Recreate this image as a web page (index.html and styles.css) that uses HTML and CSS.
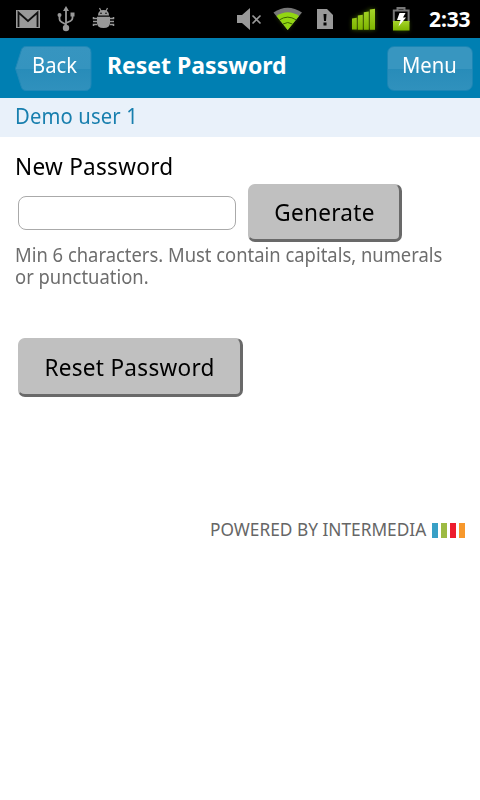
FILE: index.html
```html
<!DOCTYPE html>
<html lang="en">
<head>
<meta charset="utf-8">
<title>Reset Password</title>
<link rel="stylesheet" href="styles.css">
</head>
<body>
<div class="status">
  <svg class="status-icons" width="420" height="38" viewBox="0 0 420 38">
    <defs>
      <linearGradient id="green" x1="0" y1="0" x2="0" y2="1"><stop offset="0" stop-color="#a6d52a"/><stop offset="1" stop-color="#7eb500"/></linearGradient>
      <filter id="glow" x="-40%" y="-40%" width="180%" height="180%"><feGaussianBlur stdDeviation="2"/></filter>
    </defs>
    <g fill="#999">
      <path d="M16 10h24v18H16z"/>
      <path d="M18.500 27V12.500L28 21l9.500-8.500V27" fill="none" stroke="#111" stroke-width="1.800"/>
      <path d="M66 6l3 5h-6z"/><circle cx="66" cy="28" r="3.200"/>
      <path d="M66 10v17M59.500 16v3q0 2 2 3l4.500 2.500M72.500 15v3q0 2-2 3L66 23" fill="none" stroke="#999" stroke-width="1.800"/>
      <circle cx="59.500" cy="15" r="2"/><path d="M70.500 12.500h4v4h-4z"/>
      <path d="M98 15.500q0-5.500 5.500-5.500t5.500 5.500zM97 16.800h13v6.200q0 5-6.500 5T97 23z"/>
      <path d="M99.500 8l2 4M107.500 8l-2 4" fill="none" stroke="#999" stroke-width="1.200"/>
      <path d="M97 18.500h-3.500V17M97 21.500h-4M97 24.500h-3.500V26M110 18.500h3.500V17M110 21.500h4M110 24.500h3.500V26" fill="none" stroke="#999" stroke-width="1.500"/>
      <circle cx="101" cy="13.300" r=".8" fill="#000"/><circle cx="106" cy="13.300" r=".8" fill="#000"/>
      <path d="M237 15h5l8-7v22l-8-7h-5z"/>
      <path d="M252.500 15.500l8 8m0-8l-8 8" stroke="#999" stroke-width="1.600"/>
      <path d="M317 9h10l6 6v14h-16z"/>
      <path d="M323.500 14h3l-.5 7h-2zM323.500 22.500h3v3h-3z" fill="#050505"/>
    </g>
    <path d="M276 15q11.500-7 23 0L287.500 30z" fill="#6c9e00" filter="url(#glow)" opacity=".4"/>
    <path d="M273.500 12.500Q287.500 3 302 12.500L287.700 30z" fill="#777"/>
    <path d="M276.500 16q11.200-7.500 22.500 0L287.700 30z" fill="#92d611"/>
    <path d="M279.500 19.800q8.300-5.300 16.500 0M283 24q4.700-3 9.500 0" fill="none" stroke="#3a6500" stroke-width="1"/>
    <path d="M352 18h5v-3h6v-3h5V9h7v21h-23z" fill="#6c9e00" filter="url(#glow)" opacity=".5"/>
    <path d="M352 18.500l4.800-.8V29.500H352zM357.800 15.500l5-.8v15h-5zM363.800 12.200l5-.7v18.300h-5zM369.800 9.500l5.200-.8v21h-5.200z" fill="url(#green)"/>
    <path d="M394 21h15v10h-15z" fill="#6c9e00" filter="url(#glow)" opacity=".4"/>
    <path d="M397.500 9.500V8h7v1.500M393.800 22V10.500h14.800V22" fill="none" stroke="#777" stroke-width="2"/>
    <path d="M393 21h16.500v9.500H393z" fill="url(#green)"/>
    <path d="M399.500 13h6l-2.500 4.500h3l-7.500 9 2-6.500h-3.500z" fill="#fff"/>
  </svg>
  <span class="clock">2:33</span>
</div>
<header class="bar">
  <div class="back">
    <svg class="back-shape" width="77" height="46" viewBox="0 0 77 46">
      <defs><linearGradient id="glass" x1="0" y1="0" x2="0" y2="1"><stop offset="0" stop-color="#3795c0"/><stop offset=".5" stop-color="#3594bf"/><stop offset=".5" stop-color="#288cb9"/><stop offset="1" stop-color="#3091bd"/></linearGradient></defs>
      <path d="M11 .5h59q6 0 6 6v32q0 6-6 6H11Q7 44.500 6 40L.5 22.500 6 5Q7 .5 11 .5z" fill="url(#glass)" stroke="#2088b7"/>
    </svg>
    <span class="back-text"><span class="narrow">Back</span></span>
  </div>
  <h1 class="title">Reset Password</h1>
  <div class="menu"><span class="narrow">Menu</span></div>
</header>
<div class="user"><span class="narrow">Demo user 1</span></div>
<main class="content">
  <label class="label" for="pw"><span class="spaced">New Password</span></label>
  <div class="row">
    <input class="field" id="pw" type="password">
    <button class="button generate"><span class="spaced">Generate</span></button>
  </div>
  <div class="hint"><span class="narrow">Min 6 characters. Must contain capitals, numerals<br>or punctuation.</span></div>
  <button class="button reset"><span class="spaced">Reset Password</span></button>
</main>
<footer class="footer">
  <span class="powered">POWERED BY INTERMEDIA</span>
  <span class="stripes"><i class="blue"></i><i class="green"></i><i class="red"></i><i class="orange"></i></span>
</footer>
</body>
</html>
```
FILE: styles.css
```css
* { box-sizing: border-box; }
body { margin: 0; width: 480px; height: 800px; overflow: hidden; background: #fff; color: #000; font-family: "Noto Sans", "Open Sans", sans-serif; }
span { white-space: nowrap; }
.narrow { display: inline-block; transform: scaleX(.92); transform-origin: left; }
.spaced { display: inline-block; transform: scaleX(.94); transform-origin: left; letter-spacing: .3px; }
.status { display: flex; height: 38px; background: #000; }
.status-icons { display: block; flex: none; }
.clock { margin-left: 9px; color: #fff; font-size: 21px; font-weight: 700; line-height: 38px; letter-spacing: -.1px; }
.bar { display: flex; height: 60px; padding: 8px 7px 0 15px; background: #007fb2; color: #fff; }
.back { display: grid; width: 77px; height: 46px; }
.back-shape, .back-text { grid-area: 1 / 1; }
.back-text { padding-left: 16.5px; font-size: 22px; line-height: 37px; }
.title { margin: 0 0 0 15px; font-size: 23px; font-weight: 700; line-height: 38px; white-space: nowrap; }
.menu { margin-left: auto; width: 86px; height: 45px; padding-left: 13.5px; border: 1px solid #1b86b5; border-radius: 7px; background: linear-gradient(#3896c0 0 50%, #288cb9 50%, #3091bd); font-size: 22px; line-height: 35px; }
.user { height: 39px; padding-left: 15px; background: #e9f1fa; color: #187fae; font-size: 22px; line-height: 35px; letter-spacing: .15px; }
.content { display: flex; flex-direction: column; height: 375px; padding: 14px 15px 0; }
.label { height: 33px; font-size: 24px; line-height: 29px; }
.row { display: flex; height: 58px; padding-left: 3px; }
.field { width: 218px; height: 34px; margin: 12px 12px 0 0; border: 1px solid #aaa; border-radius: 8px; background: #fff; }
.button { height: 58px; padding: 0; border: 1px solid #c0c0c0; border-right: 3px solid #696969; border-bottom: 3px solid #696969; border-radius: 7px; background: #c0c0c0; color: #000; font-family: inherit; font-size: 24px; }
.button .spaced { transform-origin: center; }
.generate { width: 154px; padding-bottom: 2px; }
.hint { height: 44px; margin-top: 2px; color: #6d6d6d; font-size: 20px; line-height: 22px; }
.reset { width: 225px; height: 59px; margin: 50px 0 0 3px; }
.footer { display: flex; justify-content: flex-end; align-items: center; height: 36px; padding-right: 15px; color: #666; font-size: 18px; }
.powered { transform: scaleX(.96) translateY(-1px); transform-origin: right; }
.stripes { display: flex; gap: 3px; width: 33px; height: 15px; margin-left: 6px; }
.stripes i { flex: 1; }
.blue { background: #38a0c6; }
.green { background: #9dba43; }
.red { background: #ed1c2e; }
.orange { background: #f7982c; }
```
